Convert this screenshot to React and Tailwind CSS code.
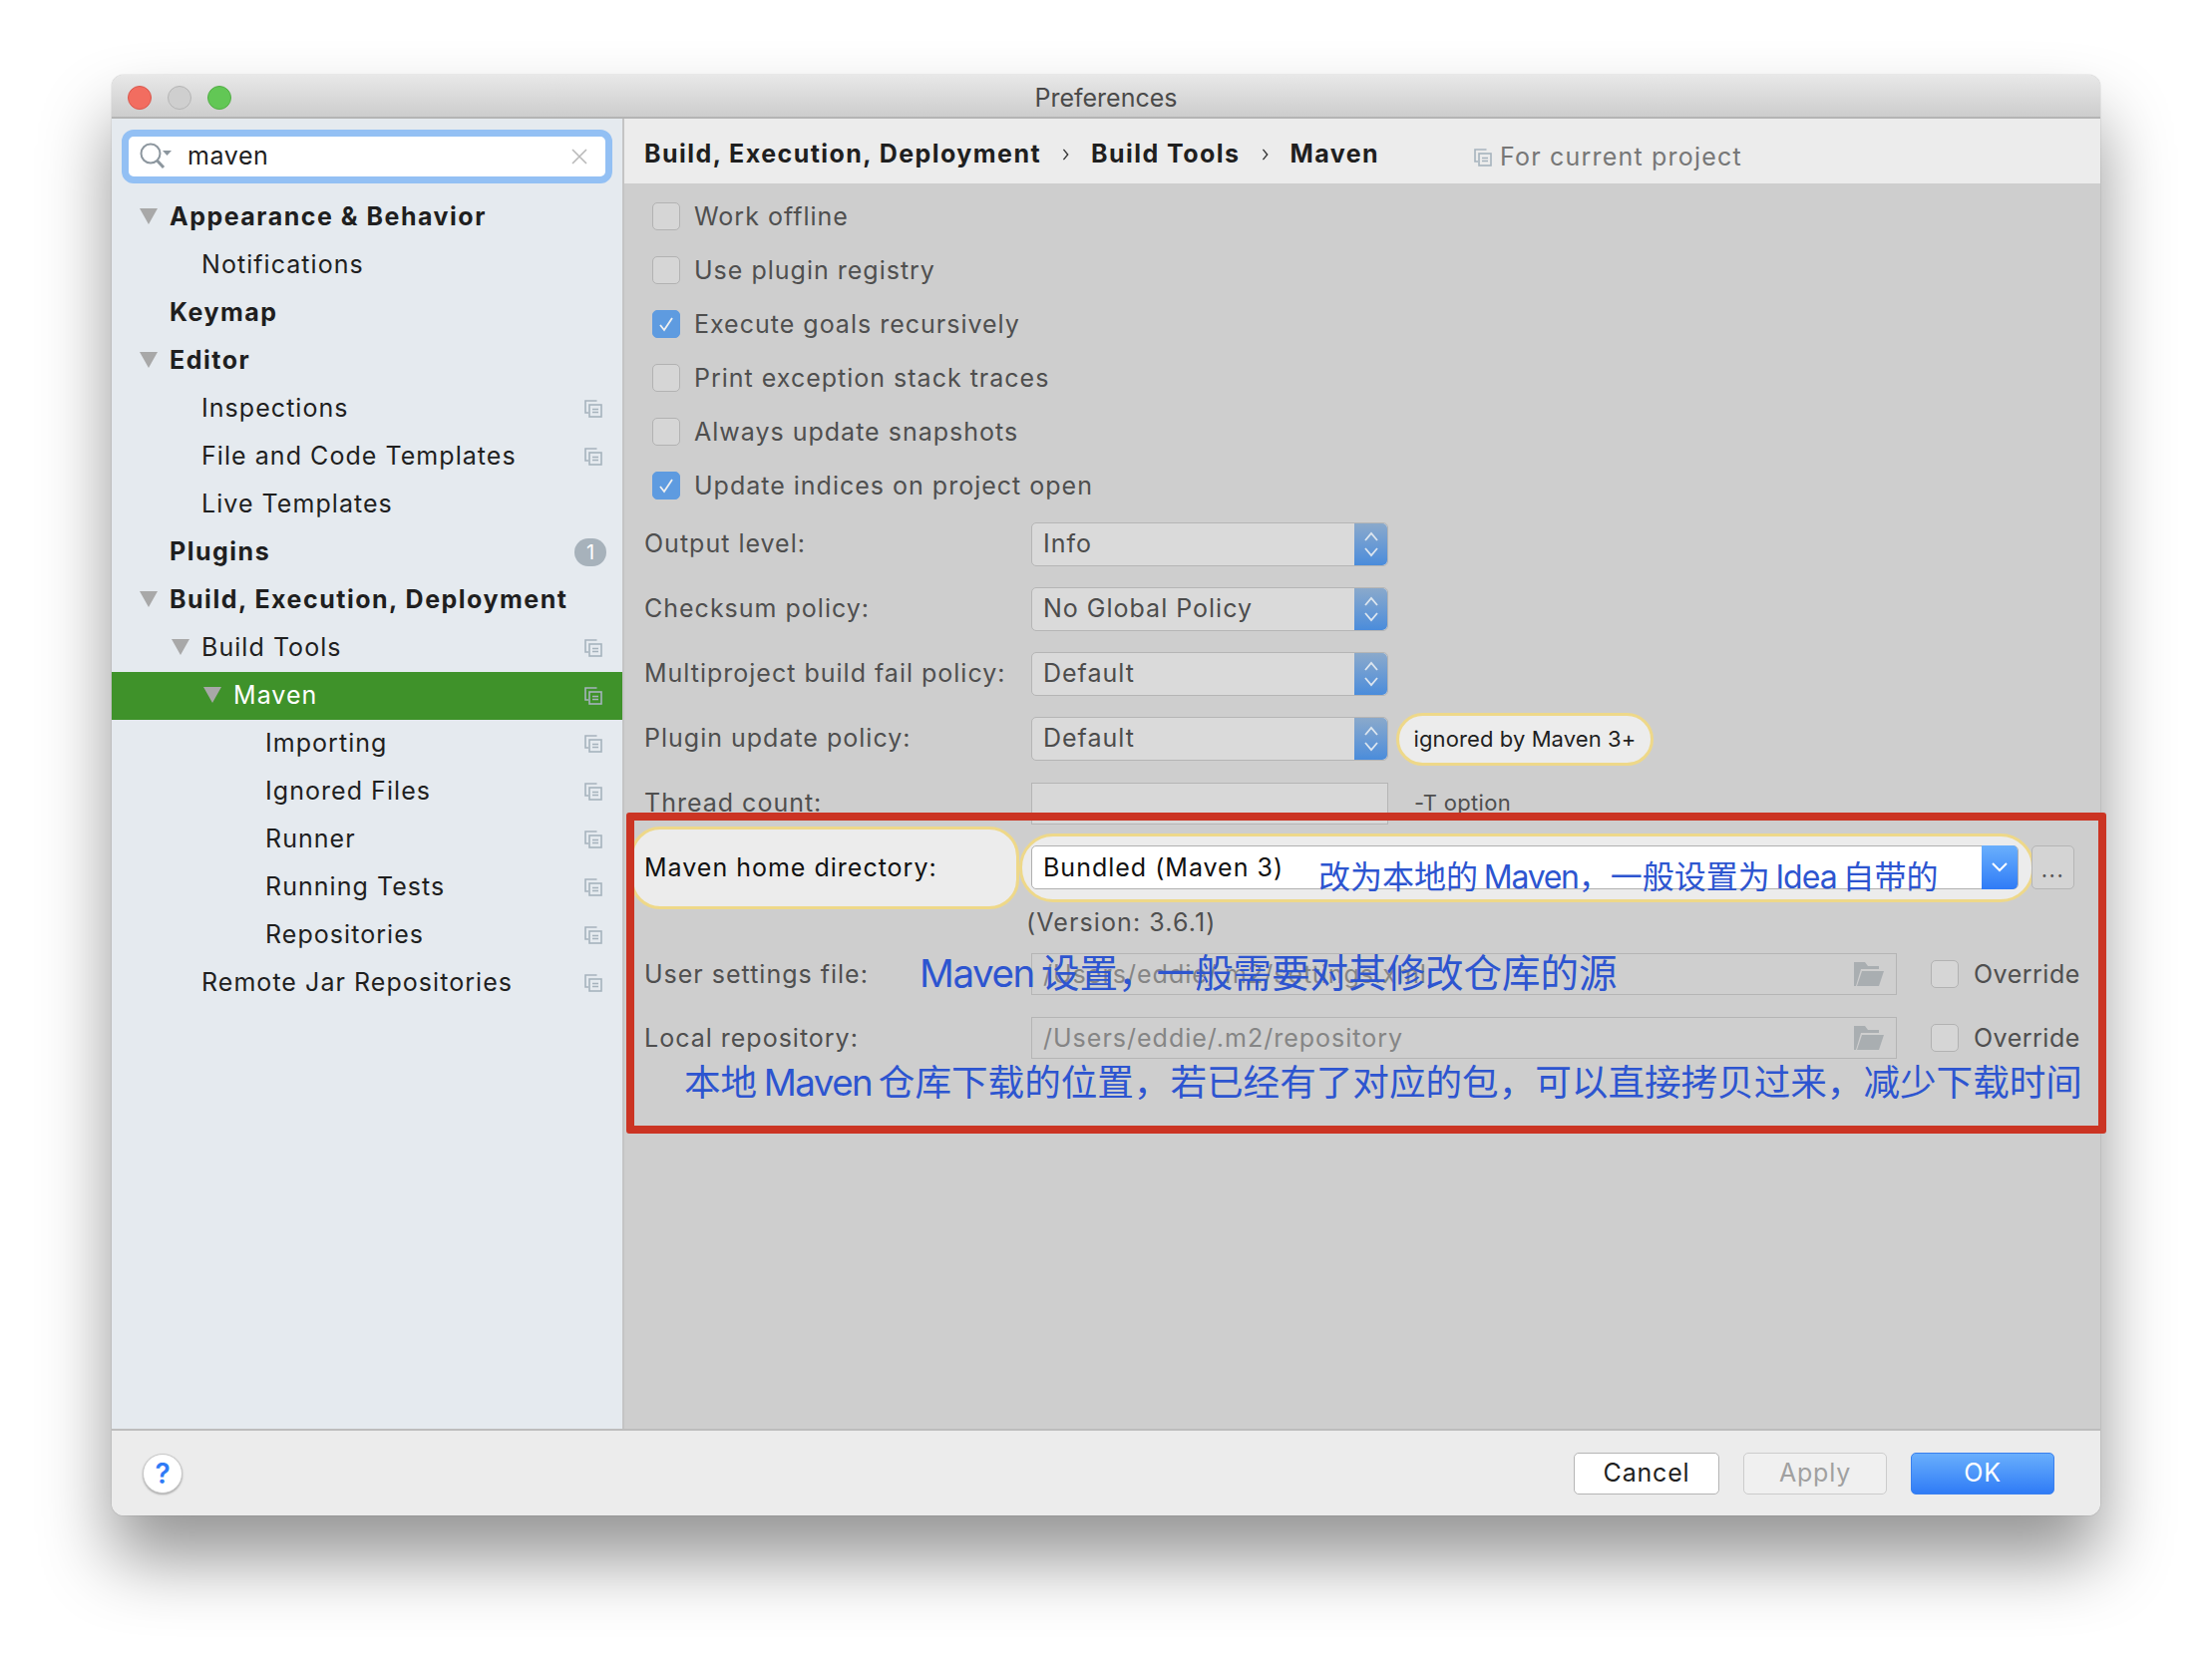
import React from "react";

const tree = [
  { label: "Appearance & Behavior", bold: true, arrow: true, indent: 0 },
  { label: "Notifications", indent: 1 },
  { label: "Keymap", bold: true, indent: 0 },
  { label: "Editor", bold: true, arrow: true, indent: 0 },
  { label: "Inspections", indent: 1, copy: true },
  { label: "File and Code Templates", indent: 1, copy: true },
  { label: "Live Templates", indent: 1 },
  { label: "Plugins", bold: true, indent: 0, badge: "1" },
  { label: "Build, Execution, Deployment", bold: true, arrow: true, indent: 0 },
  { label: "Build Tools", arrow: true, indent: 1, copy: true },
  { label: "Maven", arrow: true, indent: 2, copy: true, active: true },
  { label: "Importing", indent: 3, copy: true },
  { label: "Ignored Files", indent: 3, copy: true },
  { label: "Runner", indent: 3, copy: true },
  { label: "Running Tests", indent: 3, copy: true },
  { label: "Repositories", indent: 3, copy: true },
  { label: "Remote Jar Repositories", indent: 1, copy: true },
];

const indentClass = ["pl-[58px]", "pl-[90px]", "pl-[122px]", "pl-[154px]"];
const arrowClass = ["left-[28px]", "left-[60px]", "left-[92px]", "left-[124px]"];

const checks = [
  { label: "Work offline" },
  { label: "Use plugin registry" },
  { label: "Execute goals recursively", on: true },
  { label: "Print exception stack traces" },
  { label: "Always update snapshots" },
  { label: "Update indices on project open", on: true },
];

const CopyIcon = ({ className = "" }) => (
  <svg viewBox="0 0 18 18" className={`h-[18px] w-[18px] ${className}`} fill="none" stroke="#a6b3bd" strokeWidth="1.6">
    <path d="M12.5 1H1v12h3" />
    <rect x="5" y="5" width="12" height="12" />
    <path d="M8 9.5h6M8 12.5h6" />
  </svg>
);

const Triangle = ({ className = "" }) => (
  <svg viewBox="0 0 18 16" className={`absolute top-[15px] h-[16px] w-[18px] ${className}`}>
    <path d="M0 0h18L9 16z" fill="#a8a8a8" />
  </svg>
);

const TreeRow = ({ item }) => (
  <div
    className={`relative flex h-[48px] items-center pr-[20px] text-[25px] ${indentClass[item.indent]} ${
      item.active ? "bg-[#3f922a] text-white" : "text-[#1f1f1f]"
    } ${item.bold ? "font-bold tracking-[1.5px]" : "tracking-[1.05px]"}`}
  >
    {item.arrow && <Triangle className={arrowClass[item.indent]} />}
    <span className="flex-1">{item.label}</span>
    {item.copy && <CopyIcon />}
    {item.badge && (
      <span className="-mr-[4px] flex h-[28px] w-[32px] items-center justify-center rounded-full bg-[#a7b2bb] text-[20px] font-normal tracking-normal text-white">
        {item.badge}
      </span>
    )}
  </div>
);

const Checkbox = ({ on }) => (
  <span
    className={`flex h-[28px] w-[28px] shrink-0 items-center justify-center rounded-[5px] border ${
      on ? "border-[#5e9be0] bg-[#5e9be0]" : "border-[#b2b2b2] bg-[#d6d6d6]"
    }`}
  >
    {on && (
      <svg viewBox="0 0 18 18" className="h-[18px] w-[18px]" fill="none" stroke="#f0f0f0" strokeWidth="1.8">
        <path d="M3 10l4 5 8-12" />
      </svg>
    )}
  </span>
);

const Updown = () => (
  <span className="flex h-full w-[33px] shrink-0 items-center justify-center rounded-r-[5px] bg-gradient-to-b from-[#8aa9cb] to-[#4a8cdb]">
    <svg viewBox="0 0 16 28" className="h-[28px] w-[16px]" fill="none" stroke="#dde6ef" strokeWidth="1.8">
      <path d="M2 10l6-7 6 7M2 18l6 7 6-7" />
    </svg>
  </span>
);

const SelectRow = ({ label, value, children }) => (
  <div className="relative flex h-[44px] items-center text-[25px] tracking-[1px] text-[#4f4f4f]">
    <span className="w-[388px] shrink-0">{label}</span>
    <div className="flex h-full w-[358px] items-center rounded-[5px] border border-[#b5b5b5] bg-[#dadada] pl-[11px]">
      <span className="flex-1 text-[#4c4c4c]">{value}</span>
      <Updown />
    </div>
    {children}
  </div>
);

const FolderIcon = () => (
  <svg viewBox="0 0 30 24" className="h-[24px] w-[30px] shrink-0">
    <path d="M0 0h11l3 4h11v3H7L2 24H0z" fill="#a9aeb1" />
    <path d="M8 9h22l-5 15H3z" fill="#a9aeb1" />
  </svg>
);

const PathRow = ({ label, value }) => (
  <div className="flex h-[42px] items-center text-[25px] tracking-[1px] text-[#4f4f4f]">
    <span className="w-[388px] shrink-0 pt-[2px]">{label}</span>
    <div className="flex h-full w-[868px] items-center border border-[#b5b5b5] bg-[#cfcfcf] pl-[11px] pr-[12px] text-[#858585]">
      <span className="flex-1 pt-[2px]">{value}</span>
      <FolderIcon />
    </div>
    <span className="ml-[34px] flex items-center gap-[15px] tracking-[0.5px]">
      <Checkbox />
      <span className="pt-[2px]">Override</span>
    </span>
  </div>
);

const FooterButton = ({ className, children }) => (
  <button className={`flex h-[42px] items-center justify-center rounded-[5px] border text-[25px] tracking-[0.8px] ${className}`}>
    {children}
  </button>
);

export default function App() {
  return (
    <div className="h-[1668px] w-full overflow-hidden bg-white pl-[112px] pt-[75px] font-['Inter','Noto_Sans_CJK_SC',sans-serif]">
      <div className="relative flex h-[1445px] w-[1994px] flex-col rounded-[12px] shadow-[0_44px_70px_rgba(0,0,0,0.42),0_0_1px_rgba(0,0,0,0.5)]">
        {/* title bar */}
        <div className="relative flex h-[44px] shrink-0 items-center justify-center rounded-t-[12px] border-b-2 border-[#b4b4b4] bg-gradient-to-b from-[#e8e8e8] to-[#cdcdcd] pt-[6px] text-[25px] text-[#4a4a4a]">
          <div className="absolute left-[16px] top-[11px] flex gap-[16px]">
            <span className="h-[24px] w-[24px] rounded-full border border-[#d9584e] bg-[#f26d60]" />
            <span className="h-[24px] w-[24px] rounded-full border border-[#b5b5b5] bg-[#cfcfcf]" />
            <span className="h-[24px] w-[24px] rounded-full border border-[#52ad45] bg-[#62c755]" />
          </div>
          Preferences
        </div>

        <div className="flex min-h-0 flex-1">
          {/* sidebar */}
          <aside className="w-[514px] shrink-0 border-r-2 border-[#c4c4c4] bg-[#e5eaef] pt-[11px]">
            <div className="mx-[10px] flex h-[54px] items-center rounded-[12px] border-[7px] border-[#93c0f4] bg-white pl-[10px] pr-[18px] text-[25px] tracking-[0.6px] text-[#1f1f1f]">
              <svg viewBox="0 0 34 30" className="h-[30px] w-[34px] shrink-0" fill="none" stroke="#8c969e" strokeWidth="2">
                <circle cx="12" cy="12" r="9.5" />
                <path d="M18.5 19l6.5 7" strokeWidth="3" />
                <path d="M24 9h9l-4.5 5z" fill="#8c969e" stroke="none" />
              </svg>
              <span className="ml-[15px] flex-1">maven</span>
              <svg viewBox="0 0 16 16" className="h-[16px] w-[16px]" fill="none" stroke="#b9b9b9" strokeWidth="1.6">
                <path d="M1 1l14 14M15 1L1 15" />
              </svg>
            </div>
            <div className="mt-[10px]">
              {tree.map((item) => (
                <TreeRow key={item.label} item={item} />
              ))}
            </div>
          </aside>

          {/* settings panel */}
          <main className="min-w-0 flex-1 bg-[#cecece]">
            <div className="flex h-[65px] items-start bg-[#ececec] pl-[20px] text-[25px]">
              <div className="mt-[17px] flex w-[832px] items-center font-bold tracking-[1.45px] text-[#1f1f1f]">
                Build, Execution, Deployment
                <svg viewBox="0 0 8 14" className="mx-[21px] h-[12px] w-[8px]" fill="none" stroke="#333" strokeWidth="1.6">
                  <path d="M1 1l5 6-5 6" />
                </svg>
                Build Tools
                <svg viewBox="0 0 8 14" className="mx-[21px] h-[12px] w-[8px]" fill="none" stroke="#333" strokeWidth="1.6">
                  <path d="M1 1l5 6-5 6" />
                </svg>
                Maven
              </div>
              <div className="mt-[20px] flex items-center gap-[8px] tracking-[1.2px] text-[#777777]">
                <CopyIcon />
                For current project
              </div>
            </div>

            <div className="pl-[20px] pt-[6px]">
              <div className="pl-[8px]">
                {checks.map((c) => (
                  <div key={c.label} className="flex h-[54px] items-center gap-[14px] text-[25px] tracking-[1px] text-[#4f4f4f]">
                    <Checkbox on={c.on} />
                    <span className="pt-[2px]">{c.label}</span>
                  </div>
                ))}
              </div>

              <div className="mt-[10px] flex flex-col gap-[21px]">
                <SelectRow label="Output level:" value="Info" />
                <SelectRow label="Checksum policy:" value="No Global Policy" />
                <SelectRow label="Multiproject build fail policy:" value="Default" />
                <SelectRow label="Plugin update policy:" value="Default">
                  <span className="ml-[8px] flex h-[53px] w-[258px] items-center justify-center rounded-full border-[3px] border-[#eed889] bg-[#ececec] text-[22px] tracking-[0.1px] text-[#1f1f1f]">
                    ignored by Maven 3+
                  </span>
                </SelectRow>
                <div className="flex h-[44px] items-center text-[25px] tracking-[1px] text-[#4f4f4f]">
                  <span className="w-[388px] shrink-0">Thread count:</span>
                  <div className="h-[42px] w-[358px] border border-[#b5b5b5] bg-[#d8d8d8]" />
                  <span className="-mt-[2px] ml-[26px] text-[22px] tracking-[0.3px]">-T option</span>
                </div>
              </div>

              {/* highlighted row */}
              <div className="relative mt-[20px] flex h-[44px] items-center text-[25px] tracking-[1px] text-[#111111]">
                <div className="absolute -left-[14px] -top-[19px] h-[83px] w-[390px] rounded-[30px] border-[3px] border-[#eed889] bg-[#ececec]" />
                <div className="absolute left-[376px] -top-[12px] h-[69px] w-[1018px] rounded-[34px] border-[3px] border-[#eed889] bg-[#ececec]" />
                <span className="relative w-[388px] shrink-0 pt-[2px]">Maven home directory:</span>
                <div className="relative flex h-full w-[990px] items-center rounded-[5px] border border-[#b0b0b0] bg-white pl-[11px]">
                  <span className="flex-1 pt-[2px]">Bundled (Maven 3)</span>
                  <span className="flex h-[44px] w-[36px] items-center justify-center rounded-r-[5px] bg-gradient-to-b from-[#6aaffc] to-[#2f7bf6]">
                    <svg viewBox="0 0 16 10" className="h-[10px] w-[16px]" fill="none" stroke="white" strokeWidth="2">
                      <path d="M1 1l7 7 7-7" />
                    </svg>
                  </span>
                </div>
                <span className="relative ml-[13px] flex h-full w-[43px] items-end justify-center rounded-[5px] border border-[#b5b5b5] bg-[#d4d4d4] pb-[8px] text-[22px] leading-none tracking-[1.5px] text-[#555555]">
                  ...
                </span>
              </div>

              <div className="mt-[18px] h-[30px] pl-[383px] text-[25px] leading-[30px] tracking-[1.1px] text-[#4f4f4f]">(Version: 3.6.1)</div>

              <div className="mt-[16px] flex flex-col gap-[22px]">
                <PathRow label="User settings file:" value="/Users/eddie/.m2/settings.xml" />
                <PathRow label="Local repository:" value="/Users/eddie/.m2/repository" />
              </div>
            </div>
          </main>
        </div>

        {/* footer */}
        <div className="flex h-[87px] shrink-0 items-center rounded-b-[12px] border-t-2 border-[#bdbdbd] bg-[#ececec] pl-[31px] pr-[46px]">
          <span className="flex h-[40px] w-[40px] items-center justify-center rounded-full border border-[#c8c8c8] bg-white text-[28px] font-semibold text-[#2f7bf6] shadow-[0_1px_2px_rgba(0,0,0,0.3)]">
            ?
          </span>
          <div className="ml-auto flex gap-[24px]">
            <FooterButton className="w-[146px] border-[#b5b5b5] bg-white text-[#1f1f1f]">Cancel</FooterButton>
            <FooterButton className="w-[144px] border-[#cccccc] bg-[#f0f0f0] text-[#a0a0a0]">Apply</FooterButton>
            <FooterButton className="w-[144px] border-[#3a80ee] bg-gradient-to-b from-[#69aefc] to-[#2f7bf6] text-white">OK</FooterButton>
          </div>
        </div>

        {/* screenshot annotations */}
        <div className="pointer-events-none absolute left-[516px] top-[740px] h-[322px] w-[1484px] rounded-[3px] border-[8px] border-[#cb3423] text-[#2d55d0]">
          <span className="absolute left-[686px] top-[34px] whitespace-nowrap text-[32px] leading-[46px]">
            改为本地的{"\u2009"}<span className="tracking-[-1.3px]">Maven</span>，一般设置为{"\u2009"}<span className="tracking-[-1px]">Idea</span>{"\u2009"}自带的
          </span>
          <span className="absolute left-[286px] top-[127px] whitespace-nowrap text-[38.5px] leading-[52px]">
            <span className="tracking-[-1.4px]">Maven</span>{"\u2009"}设置，一般需要对其修改仓库的源
          </span>
          <span className="absolute left-[50px] top-[238px] whitespace-nowrap text-[36.6px] leading-[50px]">
            本地{"\u2009"}<span className="tracking-[-1.5px]">Maven</span>{"\u2009"}仓库下载的位置，若已经有了对应的包，可以直接拷贝过来，减少下载时间
          </span>
        </div>
      </div>
    </div>
  );
}
